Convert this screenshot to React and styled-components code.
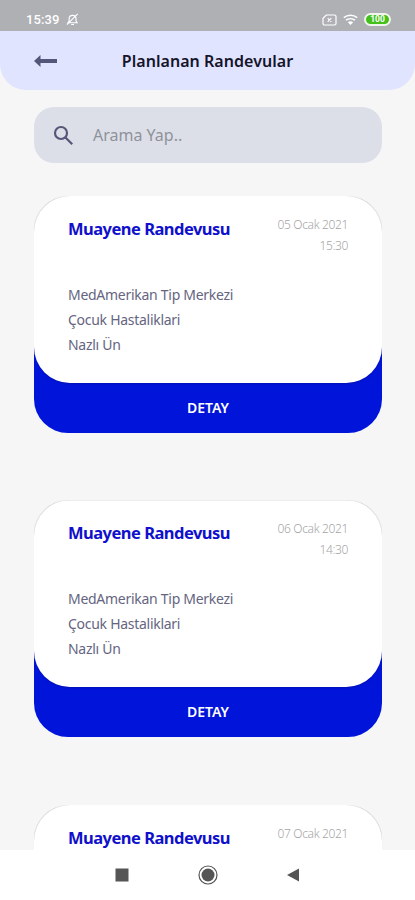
import React from 'react';
import styled, { createGlobalStyle } from 'styled-components';

const GlobalStyle = createGlobalStyle`
  * {
    box-sizing: border-box;
  }
  body {
    margin: 0;
    background: #f6f6f7;
    font-family: "Noto Sans", "Open Sans", sans-serif;
  }
`;

const Screen = styled.div`
  width: 415px;
  height: 900px;
  display: flex;
  flex-direction: column;
  overflow: hidden;
  background: #f6f6f7;
`;

const StatusBar = styled.div`
  flex: none;
  height: 31px;
  padding: 8px 24px 0 26px;
  display: flex;
  align-items: center;
  background: #afb0b4;
  color: #fff;
`;

const Clock = styled.span`
  width: 40px;
  font-family: Roboto, sans-serif;
  font-size: 13px;
  font-weight: 500;
  line-height: 16px;
  letter-spacing: 0.1px;
`;

const StatusIcons = styled.div`
  margin-left: auto;
  display: flex;
  align-items: center;
  gap: 6px;
`;

const Battery = styled.div`
  width: 27px;
  height: 13px;
  border: 2px solid #f1f5ee;
  border-radius: 6.5px;
  background: #45c01b;
  font-family: Roboto, sans-serif;
  font-size: 8.5px;
  font-weight: 700;
  line-height: 9px;
  text-align: center;
`;

const Header = styled.header`
  flex: none;
  height: 59px;
  padding: 0 34px;
  display: grid;
  grid-template-columns: 24px 1fr 24px;
  align-items: center;
  border-radius: 0 0 26px 26px;
  background: #e1e4fe;
`;

const HeaderTitle = styled.h1`
  margin: 0;
  color: #14142b;
  font-size: 16px;
  font-weight: 600;
  line-height: 24px;
  letter-spacing: 0.05px;
  text-align: center;
  white-space: nowrap;
`;

const Content = styled.main`
  flex: 1;
  min-height: 0;
  padding: 17px 33px 0 34px;
  overflow: hidden;
`;

const SearchBox = styled.div`
  height: 56px;
  margin-bottom: 33px;
  padding-left: 19px;
  display: flex;
  align-items: center;
  gap: 19px;
  border-radius: 20px;
  background: #dcdfe7;
`;

const Placeholder = styled.span`
  color: #8f929b;
  font-size: 16px;
  line-height: 24px;
`;

const Appointment = styled.article`
  height: 237px;
  margin-bottom: 67.4px;
  border-radius: 34px;
  background: linear-gradient(#dededf 0 50%, #0014da 50%);
`;

const Card = styled.div`
  height: 187px;
  padding: 17px 34px 0;
  border-radius: 36px;
  background: #fff;
  box-shadow: 0 1px 2px rgba(0, 0, 40, 0.2);
  clip-path: inset(0 0 -5px 0);
`;

const CardTop = styled.div`
  height: 69px;
  display: flex;
  justify-content: space-between;
`;

const CardTitle = styled.h2`
  margin: 4px 0 0;
  color: #1010cc;
  font-size: 16.5px;
  font-weight: 700;
  line-height: 24px;
  letter-spacing: -0.52px;
  white-space: nowrap;
`;

const DateTime = styled.div`
  padding-top: 1px;
  color: #a6a6a6;
  font-size: 12px;
  font-weight: 300;
  line-height: 21px;
  letter-spacing: -0.35px;
  text-align: right;
  white-space: nowrap;
`;

const Info = styled.div`
  color: #65657f;
  font-size: 14px;
  line-height: 25px;
  letter-spacing: -0.28px;
`;

const DetailButton = styled.button`
  display: block;
  width: 100%;
  height: 50px;
  border: 0;
  padding: 0;
  background: transparent;
  color: #fff;
  font-family: inherit;
  font-size: 14px;
  font-weight: 600;
  line-height: 20px;
`;

const NavBar = styled.nav`
  flex: none;
  height: 50px;
  padding: 0 115px;
  display: flex;
  align-items: center;
  justify-content: space-between;
  background: #fff;
`;

const details = ['MedAmerikan Tip Merkezi', 'Çocuk Hastaliklari', 'Nazlı Ün'];

const appointments = [
  { date: '05 Ocak 2021', time: '15:30', details: details },
  { date: '06 Ocak 2021', time: '14:30', details: details },
  { date: '07 Ocak 2021' },
];

const MutedIcon = () => (
  <svg width="13" height="13" viewBox="0 0 14 14" fill="none" stroke="#fff" strokeWidth="1.2">
    <path d="M2.2 10.5h9.800l-1.200-1.800V6c0-2-1.500-3.500-3.700-3.500S3.400 4 3.400 6v2.700zM5.600 12.400h3M1 12.600 12.600 1" />
  </svg>
);

const NoSimIcon = () => (
  <svg width="15" height="12" viewBox="0 0 15 12" fill="none" stroke="#fff" strokeWidth="1.2">
    <path d="M4.3 1h8.2c.9 0 1.5.6 1.5 1.5v7c0 .9-.6 1.5-1.5 1.5h-10C1.6 11 1 10.4 1 9.5V4.3zM5.7 4.2l3.6 3.6M9.3 4.2 5.7 7.8" />
  </svg>
);

const WifiIcon = () => (
  <svg width="15" height="12" viewBox="0 0 15 12" fill="none" stroke="#fff" strokeWidth="1.5">
    <path d="M.8 3.7C4.7.5 10.3.5 14.2 3.7M3 6.2c2.6-2.1 6.400-2.1 9 0" />
    <path d="M4.8 8.2c1.6-1.3 3.8-1.3 5.4 0L7.5 11z" fill="#fff" stroke="none" />
  </svg>
);

const BackIcon = () => (
  <svg width="24" height="14" viewBox="0 0 24 14" fill="#54567a">
    <path d="M0 7 6.5 1V5H23V9H6.5v4z" />
  </svg>
);

const SearchIcon = () => (
  <svg width="21" height="21" viewBox="0 0 21 21" fill="none" stroke="#565778" strokeWidth="2.2">
    <circle cx="8" cy="8" r="6" />
    <path d="m12.2 12.2 7 7" />
  </svg>
);

const App = () => {
  return (
    <>
      <GlobalStyle />
      <Screen>
        <StatusBar>
          <Clock>15:39</Clock>
          <MutedIcon />
          <StatusIcons>
            <NoSimIcon />
            <WifiIcon />
            <Battery>100</Battery>
          </StatusIcons>
        </StatusBar>
        <Header>
          <BackIcon />
          <HeaderTitle>Planlanan Randevular</HeaderTitle>
        </Header>
        <Content>
          <SearchBox>
            <SearchIcon />
            <Placeholder>Arama Yap..</Placeholder>
          </SearchBox>
          {appointments.map((item) => (
            <Appointment key={item.date}>
              <Card>
                <CardTop>
                  <CardTitle>Muayene Randevusu</CardTitle>
                  <DateTime>
                    <div>{item.date}</div>
                    {item.time && <div>{item.time}</div>}
                  </DateTime>
                </CardTop>
                {item.details && item.details.map((line) => <Info key={line}>{line}</Info>)}
              </Card>
              {item.details && <DetailButton>DETAY</DetailButton>}
            </Appointment>
          ))}
        </Content>
        <NavBar>
          <svg width="14" height="14" viewBox="0 0 14 14">
            <rect x="0.5" y="0.5" width="13" height="13" fill="#555" />
          </svg>
          <svg width="20" height="20" viewBox="0 0 20 20">
            <circle cx="10" cy="10" r="9" fill="none" stroke="#555" strokeWidth="1.2" />
            <circle cx="10" cy="10" r="6.5" fill="#555" />
          </svg>
          <svg width="14" height="14" viewBox="0 0 14 14">
            <path d="M1 7 13 .5v13z" fill="#555" />
          </svg>
        </NavBar>
      </Screen>
    </>
  );
};

export default App;
